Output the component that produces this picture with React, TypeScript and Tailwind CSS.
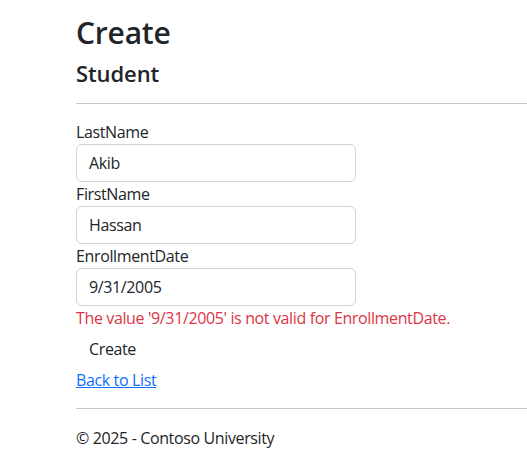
import React from "react";

export default function App() {
  const font = { fontFamily: '"Open Sans", "Noto Sans", sans-serif' };
  return (
    <div className="min-h-[464px] w-[527px] overflow-hidden bg-white text-[#212529] text-[16px] leading-[24px] tracking-[-0.37px]" style={font}>
      <div className="pl-[76px]">
        <h1 className="pt-[15px] text-[30px] leading-[36px] font-semibold tracking-[-0.2px]">Create</h1>
        <h4 className="mt-[9px] text-[22px] leading-[26px] font-semibold tracking-[-0.1px]">Student</h4>
        <hr className="mt-[17px] border-t border-[#c8c8c8]" />
        <form className="mt-[16px] w-[280px]">
          <div className="flex flex-col">
            <label className="leading-[24px]">LastName</label>
            <input defaultValue="Akib" className="h-[38px] rounded-[6px] border border-[#ced4da] px-[12px] outline-none" />
          </div>
          <div className="flex flex-col">
            <label className="leading-[24px]">FirstName</label>
            <input defaultValue="Hassan" className="h-[38px] rounded-[6px] border border-[#ced4da] px-[12px] outline-none" />
          </div>
          <div className="flex flex-col">
            <label className="leading-[24px]">EnrollmentDate</label>
            <input defaultValue="9/31/2005" className="h-[38px] rounded-[6px] border border-[#ced4da] px-[12px] outline-none" />
          </div>
        </form>
        <div className="mt-[0px] whitespace-nowrap text-[#dc3545]">The value '9/31/2005' is not valid for EnrollmentDate.</div>
        <button className="mt-[0px] h-[38px] border border-transparent px-[12px]">Create</button>
        <div className="mt-[0px]">
          <a href="#" className="text-[#0d6efd] underline">Back to List</a>
        </div>
        <hr className="mt-[16px] border-t border-[#c8c8c8]" />
        <div className="mt-[17px]">© 2025 - Contoso University</div>
      </div>
    </div>
  );
}
